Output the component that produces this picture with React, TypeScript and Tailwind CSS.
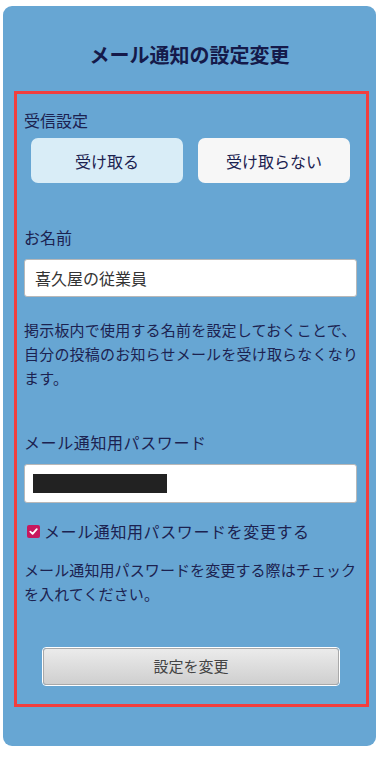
export default function App() {
  const font = { fontFamily: '"Noto Sans CJK JP", "Noto Sans", sans-serif' };
  return (
    <div className="w-[377px] min-h-[760px] bg-white pt-[6px] pl-[3px] pr-[1px]" style={font}>
      <div className="rounded-[9px] bg-[#67a6d3] pt-[35px] pb-[39px] text-[#1c2250]">
        <h1 className="text-center text-[20px] leading-[28px] font-bold text-[#151a4a]">メール通知の設定変更</h1>
        <div className="mt-[22px] ml-[11px] mr-[7px] border-[3px] border-[#f23e3e] pt-[14px] pb-[18px]">
          <div className="pl-[7px] text-[16px] leading-[24px]">受信設定</div>
          <div className="mt-[6px] flex gap-[15px] pl-[14px]">
            <button className="h-[45px] w-[152px] rounded-[7px] bg-[#d9edf7] text-[16px] text-[#1c2250]">受け取る</button>
            <button className="h-[45px] w-[152px] rounded-[7px] bg-[#f7f7f7] text-[16px] text-[#1c2250]">受け取らない</button>
          </div>

          <div className="mt-[42px] pl-[7px] text-[16px] leading-[24px]">お名前</div>
          <div className="ml-[7px] mt-[10px] flex h-[38px] w-[333px] items-center rounded-[3px] border border-[#b8b8b8] bg-white pl-[10px] text-[16px] text-[#333]">
            喜久屋の従業員
          </div>
          <p className="ml-[7px] mt-[21px] w-[340px] text-[15px] leading-[24px] tracking-[0.2px]">
            掲示板内で使用する名前を設定しておくことで、自分の投稿のお知らせメールを受け取らなくなります。
          </p>

          <div className="mt-[40px] pl-[7px] text-[16px] leading-[24px] tracking-[0.6px]">メール通知用パスワード</div>
          <div className="ml-[7px] mt-[10px] flex h-[39px] w-[333px] items-center rounded-[3px] border border-[#b8b8b8] bg-white pl-[8px]">
            <div className="h-[19px] w-[134px] bg-[#222]" />
          </div>
          <label className="ml-[10px] mt-[16px] flex items-center text-[16px] leading-[24px] tracking-[0.6px]">
            <span className="mr-[4px] flex h-[13px] w-[13px] items-center justify-center rounded-[2px] bg-[#c8175d]">
              <svg width="9" height="9" viewBox="0 0 10 10">
                <path d="M1.5 5.2 L4 7.6 L8.6 2.4" fill="none" stroke="white" strokeWidth="2" strokeLinecap="round" strokeLinejoin="round" />
              </svg>
            </span>
            メール通知用パスワードを変更する
          </label>
          <p className="ml-[7px] mt-[15px] w-[340px] text-[15px] leading-[24px] tracking-[0.1px]">
            メール通知用パスワードを変更する際はチェックを入れてください。
          </p>

          <div className="mt-[41px] flex pl-[25px]">
            <div className="rounded-[4px] border border-white">
              <button className="h-[37px] w-[296px] rounded-[3px] border border-[#a9a9a9] bg-gradient-to-b from-[#ebebeb] to-[#cfcfcf] text-[15px] text-[#444]">
                設定を変更
              </button>
            </div>
          </div>
        </div>
      </div>
    </div>
  );
}
